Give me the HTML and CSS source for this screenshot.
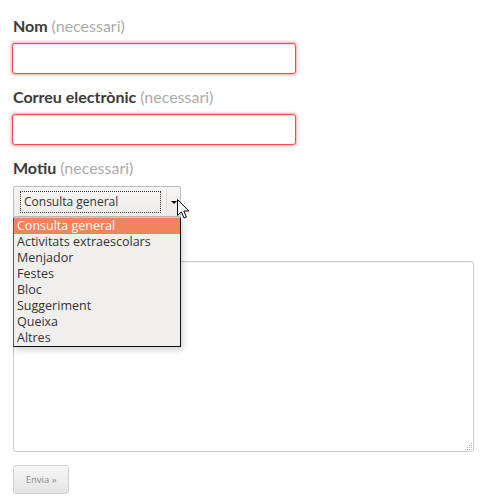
FILE: index.html
```html
<!DOCTYPE html>
<html>
<head>
<meta charset="utf-8">
<link rel="stylesheet" href="styles.css">
</head>
<body>
<form class="form">
  <div class="field">
    <label class="lbl">Nom <span class="req">(necessari)</span></label>
    <div class="inp err"></div>
  </div>
  <div class="field">
    <label class="lbl">Correu electrònic <span class="req">(necessari)</span></label>
    <div class="inp err"></div>
  </div>
  <div class="field field-select">
    <label class="lbl">Motiu <span class="req">(necessari)</span></label>
    <div class="select-wrap">
      <div class="select">
        <span class="sel-val">Consulta general</span>
        <span class="sel-btn"><i class="caret"></i></span>
      </div>
      <ul class="dropdown">
        <li class="active">Consulta general</li>
        <li>Activitats extraescolars</li>
        <li>Menjador</li>
        <li>Festes</li>
        <li>Bloc</li>
        <li>Suggeriment</li>
        <li>Queixa</li>
        <li>Altres</li>
      </ul>
      <svg class="cursor" width="13" height="20" viewBox="0 0 13 20"><path d="M0.5 0.5 L0.5 16.5 L4.3 12.8 L7 19 L9.4 18 L6.8 12 L11.8 12 Z" fill="#fff" stroke="#000" stroke-width="1" stroke-linejoin="miter"/></svg>
    </div>
  </div>
  <div class="textarea">
    <svg class="grip" width="9" height="9" viewBox="0 0 9 9"><g fill="#b5b5b5"><rect x="7" y="1" width="1" height="1"/><rect x="5" y="3" width="1" height="1"/><rect x="7" y="3" width="1" height="1"/><rect x="3" y="5" width="1" height="1"/><rect x="5" y="5" width="1" height="1"/><rect x="7" y="5" width="1" height="1"/><rect x="1" y="7" width="1" height="1"/><rect x="3" y="7" width="1" height="1"/><rect x="5" y="7" width="1" height="1"/><rect x="7" y="7" width="1" height="1"/></g></svg>
  </div>
  <div class="btn">Envia »</div>
</form>
</body>
</html>
```

FILE: styles.css
```css
html, body {
  margin: 0;
  padding: 0;
  background: #fff;
}
body {
  font-family: Lato, "Open Sans", sans-serif;
  color: #333;
}
.form {
  padding: 16px 0 0 13px;
}
.field {
  margin-bottom: 13px;
}
.lbl {
  display: block;
  font-size: 16px;
  line-height: 20px;
  height: 20px;
  font-weight: 700;
  color: #3a3a3a;
  margin-bottom: 7px;
}
.req {
  font-weight: 400;
  color: #ababab;
}
.inp {
  box-sizing: border-box;
  width: 284px;
  height: 31px;
  margin-left: -1px;
  border-radius: 3px;
  background: #fff;
}
.inp.err {
  border: 1px solid #f04f4f;
  box-shadow: 0 0 3px 1px rgba(255, 90, 90, 0.55), inset 0 1px 1px rgba(0, 0, 0, 0.12);
}
.field-select .lbl {
  margin-bottom: 8px;
}
.field-select {
  margin-bottom: 0;
}
.select-wrap {
  position: relative;
  width: 168px;
}
.select {
  box-sizing: border-box;
  height: 31px;
  width: 168px;
  border: 1px solid #bdbdbd;
  border-radius: 2px 2px 0 0;
  background: linear-gradient(#f6f5f4, #eeedeb);
  display: flex;
  align-items: center;
  padding: 0 0 0 6px;
}
.sel-val {
  box-sizing: border-box;
  flex: 1;
  height: 22px;
  border: 1px dotted #333;
  font-family: "Open Sans", sans-serif;
  font-size: 12px;
  line-height: 20px;
  color: #333;
  padding-left: 3px;
}
.sel-btn {
  width: 13px;
  height: 27px;
  margin-left: 5px;
  border-left: 1px solid #dcdbd9;
  display: flex;
  align-items: center;
  justify-content: center;
}
.caret {
  display: block;
  width: 0;
  height: 0;
  border-left: 3px solid transparent;
  border-right: 3px solid transparent;
  border-top: 3px solid #111;
  margin-top: 1px;
}
.dropdown {
  position: absolute;
  left: 0;
  top: 31px;
  box-sizing: border-box;
  width: 168px;
  margin: 0;
  padding: 0;
  list-style: none;
  background: #f0efed;
  border: 1px solid #111;
  border-left-color: #555;
  border-top: 1px solid #c8c8c8;
  box-shadow: 2px 3px 6px rgba(0, 0, 0, 0.18);
  z-index: 2;
}
.dropdown li {
  height: 16px;
  line-height: 16px;
  font-family: "Open Sans", sans-serif;
  font-size: 12.5px;
  color: #333;
  padding-left: 3px;
  white-space: nowrap;
}
.dropdown li.active {
  background: #f0845a;
  color: #fff;
}
.cursor {
  position: absolute;
  left: 164px;
  top: 13px;
  z-index: 3;
}
.textarea {
  position: relative;
  box-sizing: border-box;
  margin-top: 44px;
  width: 461px;
  height: 191px;
  border: 1px solid #c9c9c9;
  border-radius: 3px;
  background: #fff;
  box-shadow: inset 0 1px 1px rgba(0, 0, 0, 0.05);
}
.grip {
  position: absolute;
  right: 0;
  bottom: 0;
}
.btn {
  box-sizing: border-box;
  margin-top: 13px;
  width: 56px;
  height: 29px;
  border: 1px solid #d2d2d2;
  border-radius: 3px;
  background: linear-gradient(#f7f7f7, #e4e4e4);
  box-shadow: 0 1px 1px rgba(0, 0, 0, 0.06);
  font-family: "Open Sans", sans-serif;
  font-size: 9.5px;
  color: #8a8a8a;
  display: flex;
  align-items: center;
  justify-content: center;
}
```
